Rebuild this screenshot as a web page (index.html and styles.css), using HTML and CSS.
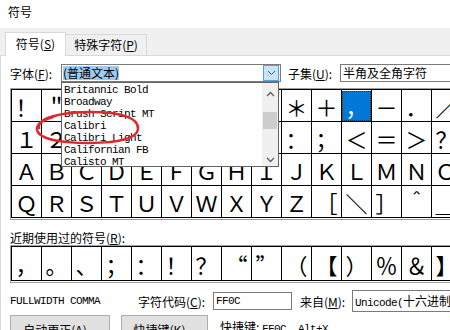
FILE: index.html
```html
<!DOCTYPE html>
<html lang="zh-CN">

<head>
    <meta charset="UTF-8">
    <title>符号</title>
    <link rel="stylesheet" href="styles.css">
</head>

<body>
    <div class="titlebar">符号</div>

    <div class="tabs">
        <div class="tab active">符号(<u>S</u>)</div>
        <div class="tab">特殊字符(<u>P</u>)</div>
    </div>

    <div class="panel">
        <!-- 字体 / 子集 -->
        <div class="font-row">
            <span class="font-label">字体(<u>F</u>):</span>
            <div class="combo font-combo">
                <span class="sel">(普通文本)</span>
                <span class="drop-btn">
                    <svg width="9" height="6" viewBox="0 0 9 6"><path d="M1 1 L4.5 4.5 L8 1" fill="none" stroke="#555" stroke-width="1"/></svg>
                </span>
                <div class="font-list">
                    <div class="item">Britannic Bold</div>
                    <div class="item">Broadway</div>
                    <div class="item">Brush Script MT</div>
                    <div class="item">Calibri</div>
                    <div class="item">Calibri Light</div>
                    <div class="item">Californian FB</div>
                    <div class="item">Calisto MT</div>
                    <div class="scroll">
                        <svg class="arr up" width="9" height="6" viewBox="0 0 9 6"><path d="M1 5 L4.5 1.5 L8 5" fill="none" stroke="#606060" stroke-width="1.3"/></svg>
                        <div class="thumb"></div>
                        <svg class="arr down" width="9" height="6" viewBox="0 0 9 6"><path d="M1 1 L4.5 4.5 L8 1" fill="none" stroke="#606060" stroke-width="1.3"/></svg>
                    </div>
                </div>
            </div>
            <span class="subset-label">子集(<u>U</u>):</span>
            <div class="combo subset">半角及全角字符</div>
        </div>

        <!-- 字符表 -->
        <div class="charmap">
            <div class="rows">
                <div class="row">
                    <div class="cell">！</div><div class="cell">＂</div><div class="cell">＃</div><div class="cell">＄</div>
                    <div class="cell">％</div><div class="cell">＆</div><div class="cell">＇</div><div class="cell">（</div>
                    <div class="cell">）</div><div class="cell">＊</div><div class="cell">＋</div><div class="cell"><span class="picked">，</span></div>
                    <div class="cell">－</div><div class="cell">．</div><div class="cell">／</div><div class="cell">０</div>
                </div>
                <div class="row">
                    <div class="cell">１</div><div class="cell">２</div><div class="cell">３</div><div class="cell">４</div>
                    <div class="cell">５</div><div class="cell">６</div><div class="cell">７</div><div class="cell">８</div>
                    <div class="cell">９</div><div class="cell">：</div><div class="cell">；</div><div class="cell">＜</div>
                    <div class="cell">＝</div><div class="cell">＞</div><div class="cell">？</div><div class="cell">＠</div>
                </div>
                <div class="row">
                    <div class="cell">Ａ</div><div class="cell">Ｂ</div><div class="cell">Ｃ</div><div class="cell">Ｄ</div>
                    <div class="cell">Ｅ</div><div class="cell">Ｆ</div><div class="cell">Ｇ</div><div class="cell">Ｈ</div>
                    <div class="cell">Ｉ</div><div class="cell">Ｊ</div><div class="cell">Ｋ</div><div class="cell">Ｌ</div>
                    <div class="cell">Ｍ</div><div class="cell">Ｎ</div><div class="cell">Ｏ</div><div class="cell">Ｐ</div>
                </div>
                <div class="row">
                    <div class="cell">Ｑ</div><div class="cell">Ｒ</div><div class="cell">Ｓ</div><div class="cell">Ｔ</div>
                    <div class="cell">Ｕ</div><div class="cell">Ｖ</div><div class="cell">Ｗ</div><div class="cell">Ｘ</div>
                    <div class="cell">Ｙ</div><div class="cell">Ｚ</div><div class="cell">［</div><div class="cell">＼</div>
                    <div class="cell">］</div><div class="cell">＾</div><div class="cell">＿</div><div class="cell">｀</div>
                </div>
            </div>
        </div>

        <!-- 红色手绘圈 -->
        <svg class="mark" width="115" height="42" viewBox="0 0 115 42">
            <path d="M8 22 C6 12, 30 6, 60 6 C90 6, 108 12, 107 23 C106 33, 85 37, 58 37 C30 37, 8 33, 6 24 C5 18, 12 14, 22 11" fill="none" stroke="#e3262b" stroke-width="2.4" stroke-linecap="round"/>
        </svg>

        <div class="recent-label">近期使用过的符号(<u>R</u>):</div>
        <div class="charmap recent">
            <div class="rows">
                <div class="row">
                    <div class="cell">，</div><div class="cell">。</div><div class="cell">、</div><div class="cell">；</div>
                    <div class="cell">：</div><div class="cell">！</div><div class="cell">？</div><div class="cell">“</div>
                    <div class="cell">”</div><div class="cell">（</div><div class="cell">【</div><div class="cell">）</div>
                    <div class="cell">％</div><div class="cell">＆</div><div class="cell">】</div>
                </div>
            </div>
        </div>

        <div class="info-row">
            <span class="char-name mono">FULLWIDTH COMMA</span>
            <span class="code-label">字符代码(<u>C</u>):</span>
            <div class="field code mono">FF0C</div>
            <span class="from-label">来自(<u>M</u>):</span>
            <div class="field from"><span class="mono">Unicode(</span>十六进制)</div>
        </div>

        <div class="btn-row">
            <button class="btn auto">自动更正(<u>A</u>)...</button>
            <button class="btn keys">快捷键(<u>K</u>)...</button>
            <span class="shortcut">快捷键: <span class="mono">FF0C, Alt+X</span></span>
        </div>
    </div>
</body>

</html>
```

FILE: styles.css
```css
body {
    margin: 0;
    width: 450px;
    height: 330px;
    overflow: hidden;
    background: #f0f0f0;
    font-family: "Noto Sans CJK SC", sans-serif;
    font-size: 12px;
    color: #000;
}

u {
    text-decoration: underline;
    text-underline-offset: 1px;
}

.mono {
    font-family: "Liberation Mono", "Noto Sans CJK SC", monospace;
    font-size: 11px;
    letter-spacing: -0.6px;
}

.titlebar {
    height: 28px;
    line-height: 24px;
    padding-left: 8px;
    background: #fff;
    box-sizing: border-box;
}

/* 选项卡 */
.tabs {
    display: flex;
    align-items: flex-end;
    height: 27px;
    padding-left: 5px;
}

.tab {
    height: 21px;
    width: 81px;
    line-height: 20px;
    text-align: center;
    box-sizing: border-box;
    border: 1px solid #d9d9d9;
    border-bottom: none;
    border-left: none;
    background: #f0f0f0;
}

.tab.active {
    position: relative;
    z-index: 1;
    width: 61px;
    height: 24px;
    line-height: 22px;
    margin-bottom: -1px;
    border-left: 1px solid #d9d9d9;
    background: #fff;
}

.panel {
    position: relative;
    height: 275px;
    padding: 8px 0 0 9px;
    background: #fff;
    border-top: 1px solid #d9d9d9;
    border-left: 1px solid #d9d9d9;
    overflow: hidden;
}

/* 字体行 */
.font-row {
    display: flex;
    align-items: center;
    height: 18px;
}

.font-label {
    width: 51px;
    flex: none;
}

.combo {
    height: 18px;
    box-sizing: border-box;
    border: 1px solid #7a7a7a;
    background: #fff;
    flex: none;
}

.font-combo {
    position: relative;
    z-index: 2;
    width: 220px;
    display: flex;
    align-items: center;
}

.sel {
    margin-left: 1px;
    height: 14px;
    line-height: 14px;
    background: #9fcbf0;
}

.drop-btn {
    margin-left: auto;
    margin-right: 1px;
    width: 16px;
    height: 16px;
    box-sizing: border-box;
    border: 1px solid #569de5;
    background: #cce4f7;
    display: flex;
    align-items: center;
    justify-content: center;
}

.font-list {
    position: absolute;
    left: -1px;
    top: 17px;
    width: 218px;
    height: 85px;
    box-sizing: border-box;
    padding: 1px 0 0 2px;
    border: 1px solid #646464;
    background: #fff;
    overflow: hidden;
}

.font-list .item {
    height: 12px;
    line-height: 12px;
    font-family: "Liberation Mono", monospace;
    font-size: 11px;
    letter-spacing: -0.6px;
}

.scroll {
    position: absolute;
    right: 0;
    top: 0;
    width: 16px;
    height: 100%;
    background: #f0f0f0;
}

.scroll .arr {
    position: absolute;
    left: 4px;
}

.scroll .up {
    top: 8px;
}

.scroll .down {
    top: 74px;
}

.thumb {
    position: absolute;
    left: 1px;
    top: 29px;
    width: 14px;
    height: 17px;
    background: #cdcdcd;
}

.subset-label {
    margin-left: 7px;
    width: 52px;
    flex: none;
}

.subset {
    width: 120px;
    padding-left: 2px;
    line-height: 16px;
}

/* 字符表 */
.charmap {
    margin-top: 6px;
    width: max-content;
    border: 1px solid #a0a0a0;
    border-right: none;
    padding-bottom: 1px;
    background: #fff;
}

.rows {
    border-bottom: 1px solid #000;
}

.row {
    display: flex;
}

.cell {
    flex: none;
    width: 29px;
    height: 31px;
    border-left: 1px solid #000;
    border-top: 1px solid #000;
    display: flex;
    align-items: center;
    justify-content: center;
    font-family: "Noto Sans CJK SC", sans-serif;
    font-size: 22px;
    line-height: 1;
}

.picked {
    width: 29px;
    height: 30px;
    display: flex;
    align-items: center;
    justify-content: center;
    background: #0078d7;
    color: #fff;
    outline: 1px dotted #333;
    outline-offset: -1px;
}

.mark {
    position: absolute;
    left: 30px;
    top: 50px;
    z-index: 3;
}

.recent-label {
    margin-top: 11px;
    line-height: 14px;
}

.charmap.recent {
    margin-top: 0;
}

.recent .cell {
    height: 33px;
    font-size: 22px;
}

/* 底部信息 */
.info-row {
    display: flex;
    align-items: center;
    height: 22px;
    margin-top: 7px;
}

.char-name {
    width: 128px;
    flex: none;
}

.code-label {
    width: 75px;
    flex: none;
}

.field {
    flex: none;
    box-sizing: border-box;
    border: 1px solid #7a7a7a;
    background: #fff;
    padding-left: 2px;
}

.code {
    width: 79px;
    height: 18px;
    line-height: 16px;
}

.from-label {
    margin-left: 8px;
    width: 52px;
    flex: none;
}

.from {
    width: 120px;
    height: 22px;
    line-height: 20px;
    white-space: nowrap;
}

.btn-row {
    display: flex;
    align-items: flex-start;
    margin-top: 3px;
}

.btn {
    flex: none;
    height: 28px;
    padding: 0;
    border: 1px solid #adadad;
    background: #e1e1e1;
    font-family: "Noto Sans CJK SC", sans-serif;
    font-size: 12px;
    color: #000;
}

.auto {
    width: 100px;
}

.keys {
    width: 87px;
    margin-left: 11px;
}

.shortcut {
    margin-left: 12px;
    margin-top: 3px;
}
```
